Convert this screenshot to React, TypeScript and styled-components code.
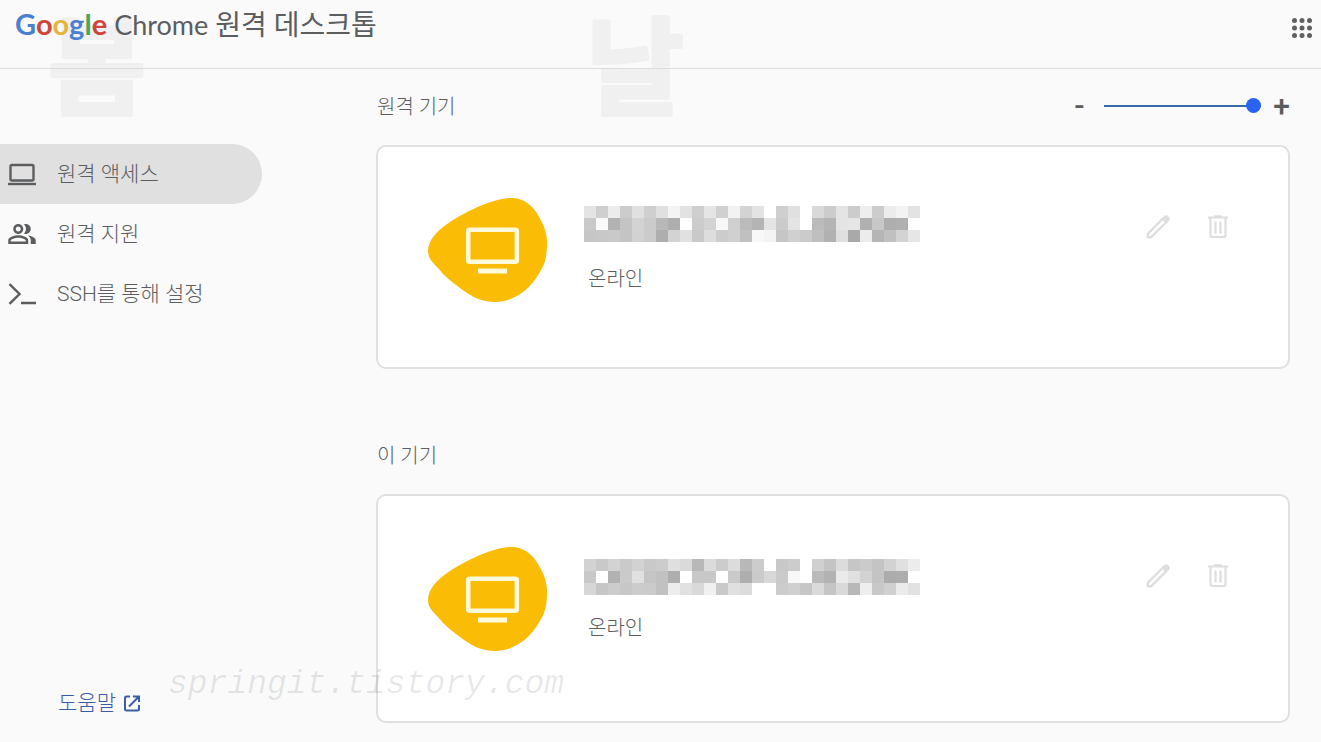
import React from "react";
import styled, { createGlobalStyle } from "styled-components";
import { MdOutlinePeopleAlt } from "react-icons/md";

const GlobalStyle = createGlobalStyle`
  * { box-sizing: border-box; }
  body {
    margin: 0;
    background: #fafafa;
    color: #5b5d5f;
    font-family: Roboto, "Noto Sans CJK KR", sans-serif;
    font-weight: 300;
  }
  button { border: 0; padding: 0; background: none; color: inherit; font-family: inherit; cursor: pointer; }
  a { color: inherit; text-decoration: none; }
  svg { display: block; flex: none; }
`;

const Page = styled.div`
  position: relative;
  min-height: 100vh;
  display: flex;
  flex-direction: column;
  isolation: isolate;
  overflow: hidden;
`;

const Header = styled.header`
  height: 69px;
  display: flex;
  align-items: flex-start;
  justify-content: space-between;
  padding: 4px 7px 0 15px;
  border-bottom: 1px solid #dcdcdc;
`;

const Brand = styled.a`
  display: flex;
  align-items: baseline;
  gap: 7px;
  line-height: 40px;
  white-space: nowrap;
`;

const Google = styled.span`
  font-family: Lato, sans-serif;
  font-weight: 700;
  font-size: 29px;
`;

const Letter = styled.span<{ $color: string }>`
  color: ${(p) => p.$color};
`;

const Chrome = styled.span`
  font-family: Lato, sans-serif;
  font-weight: 400;
  font-size: 27px;
`;

const Product = styled.span`
  font-family: Roboto, "Noto Sans CJK KR", sans-serif;
  font-size: 28px;
  font-weight: 400;
`;

const AppsButton = styled.button`
  margin-top: 12px;
`;

const Body = styled.div`
  flex: 1;
  display: flex;
`;

const Sidebar = styled.aside`
  flex: none;
  width: 376px;
  display: flex;
  flex-direction: column;
  justify-content: space-between;
  padding: 75px 0 24px;
`;

const Nav = styled.nav`
  width: 262px;
  display: flex;
  flex-direction: column;
`;

const NavItem = styled.a<{ $active?: boolean }>`
  height: 60px;
  display: flex;
  align-items: center;
  gap: 20px;
  padding-left: 7px;
  border-radius: 0 30px 30px 0;
  background: ${(p) => (p.$active ? "#e0e0e0" : "transparent")};
  font-size: 21px;
  line-height: 30px;
`;

const HelpLink = styled.a`
  display: flex;
  align-items: center;
  gap: 7px;
  padding-left: 58px;
  color: #3c5ca8;
  font-size: 21px;
  line-height: 30px;
`;

const Main = styled.main`
  flex: 1;
  min-width: 0;
  display: flex;
  flex-direction: column;
  gap: 49px;
  padding: 0 31px 19px 0;
`;

const Section = styled.section<{ $grow?: boolean }>`
  display: flex;
  flex-direction: column;
  flex-grow: ${(p) => (p.$grow ? 1 : 0)};
`;

const SectionHead = styled.div`
  height: 76px;
  display: flex;
  align-items: center;
  justify-content: space-between;
  padding-left: 1px;
`;

const Title = styled.h2`
  margin: 0;
  font-size: 20px;
  font-weight: 300;
  line-height: 30px;
`;

const Zoom = styled.div`
  display: flex;
  align-items: center;
  gap: 12px;
  padding-bottom: 3px;
`;

const ZoomButton = styled.button`
  font-size: 30px;
  line-height: 30px;
  font-weight: 500;
`;

const Slider = styled.input`
  appearance: none;
  width: 157px;
  height: 15px;
  margin: 0 0 0 8px;
  background: linear-gradient(#366aa6, #366aa6) center / 100% 2px no-repeat;
  &::-webkit-slider-thumb {
    appearance: none;
    width: 15px;
    height: 15px;
    border-radius: 50%;
    background: #2a62f4;
  }
`;

const Card = styled.article`
  flex: 1;
  min-height: 224px;
  display: flex;
  align-items: flex-start;
  padding: 50px 55px 0 50px;
  background: #fff;
  border: 2px solid #e0e0e0;
  border-radius: 10px;
`;

const Info = styled.div`
  flex: 1;
  display: flex;
  flex-direction: column;
  gap: 18px;
  padding: 9px 0 0 37px;
`;

const NameBox = styled.div<{ $low?: boolean }>`
  height: 40px;
  display: flex;
  align-items: ${(p) => (p.$low ? "flex-end" : "flex-start")};
`;

const Status = styled.p`
  margin: 0;
  padding-left: 4px;
  font-size: 20px;
  line-height: 30px;
`;

const Actions = styled.div`
  display: flex;
  gap: 30px;
  padding-top: 15px;
  color: #dedede;
`;

const WatermarkSyllable = styled.svg<{ $left: number }>`
  position: absolute;
  z-index: -1;
  top: 7px;
  left: ${(p) => p.$left}px;
  fill: #f0f0f0;
  stroke: #f0f0f0;
  stroke-width: 4px;
  stroke-linejoin: round;
  font-family: "Noto Sans CJK KR", sans-serif;
  font-size: 106px;
  font-weight: 700;
  pointer-events: none;
`;

const WatermarkSite = styled.span`
  position: absolute;
  top: 665px;
  left: 168px;
  color: rgba(0, 0, 0, 0.09);
  font-family: "Liberation Mono", monospace;
  font-style: italic;
  font-size: 33px;
  line-height: 40px;
  pointer-events: none;
`;

const AppsIcon = () => (
  <svg width="24" height="24" viewBox="0 0 24 24" fill="#5f6163">
    {[4.5, 12, 19.5].map((y) =>
      [4.5, 12, 19.5].map((x) => <circle key={`${x}-${y}`} cx={x} cy={y} r="2.5" />)
    )}
  </svg>
);

const LaptopIcon = () => (
  <svg width="30" height="30" viewBox="0 0 30 30" fill="none" stroke="currentColor">
    <rect x="3.5" y="6" width="23" height="15.5" rx="1.5" strokeWidth="2.4" />
    <path d="M1 25h28" strokeWidth="2.4" />
  </svg>
);

const PromptIcon = () => (
  <svg width="30" height="30" viewBox="0 0 30 30" fill="none" stroke="currentColor" strokeWidth="2.4">
    <path d="M2.5 5.2 12.5 15 2.5 24.8M14 24h15" />
  </svg>
);

const OpenIcon = () => (
  <svg width="18" height="18" viewBox="0 0 18 18" fill="none" stroke="currentColor" strokeWidth="2">
    <path d="M7 2.5H3.5A1.5 1.5 0 0 0 2 4v11a1.5 1.5 0 0 0 1.5 1.5h11A1.5 1.5 0 0 0 16 15v-4M10 2.5h6V8M16 2.5l-10 10" />
  </svg>
);

const PencilIcon = () => (
  <svg width="30" height="30" viewBox="0 0 30 30" fill="none" stroke="currentColor">
    <path d="M4.8 25.2v-3.4L20.5 6 24 9.5 8.2 25.2z" strokeWidth="2.4" strokeLinejoin="round" />
    <path
      d="m19.5 7 2.3-2.3q1.5-1.2 3.2.3t.3 3.3L23 10.5z"
      fill="currentColor"
      strokeWidth="1.6"
      strokeLinejoin="round"
    />
  </svg>
);

const TrashIcon = () => (
  <svg width="30" height="30" viewBox="0 0 30 30" fill="none" stroke="currentColor" strokeWidth="2.2">
    <path d="M5 5.5h20M11 4.3h8M7.5 6v17.5A1.5 1.5 0 0 0 9 25h12a1.5 1.5 0 0 0 1.5-1.5V6M12.500 9.5v12M17.5 9.5v12" />
  </svg>
);

const DeviceIcon = () => (
  <svg width="119" height="106" viewBox="0 0 119 106">
    <path
      fill="#fabc05"
      d="M0 54C0 44 8 34 22 25C36 16 64 1 84 1C96 1 105 9 110 18C116 28 119 36 119 46C119 60 117 68 110 78C102 92 86 105 67 105C54 105 44 100 32 91C24 85 16 79 10 71C3 64 0 60 0 54Z"
    />
    <rect x="40.2" y="32.7" width="48.6" height="32" rx="1.5" fill="none" stroke="#fffadc" strokeWidth="4.5" />
    <path d="M50 74h29" stroke="#fffadc" strokeWidth="5" />
  </svg>
);

const CELL = 12;

const MaskedName = ({ rows }: { rows: string[] }) => (
  <svg width="336" height="36" viewBox="0 0 336 36" shapeRendering="crispEdges" aria-hidden="true">
    {rows.map((row, y) =>
      row.split(" ").map((tone, x) => (
        <rect key={`${x}-${y}`} x={x * CELL} y={y * CELL} width={CELL} height={CELL} fill={`#${tone}${tone}${tone}`} />
      ))
    )}
  </svg>
);

const remoteName = [
  "e4 cf ec cc e0 cf e0 f4 e2 cf e5 d0 f2 d3 e3 ff cf e0 ff d9 cc e4 cc ee cc ec f3 e3",
  "c9 fa b2 c4 d3 cb b8 ae ff cc d3 f8 cf bb b4 e4 cb e4 ff bb b4 e4 e6 b0 c8 ae b0 ff",
  "c6 c8 c9 c4 d2 cb ae d3 e1 c9 dd cc d0 c0 f8 f4 c6 d0 cb bf b1 df a9 ec b5 c0 d3 e6",
];

const localName = [
  "d2 c9 d3 ca d2 c9 cc df da b8 db cc dc b8 cc ff c8 cc ff d0 c4 dc c6 cb c4 d2 e0 ec",
  "c8 ff b2 ca e0 c5 c1 ae ff c8 c8 ff ca ae cb d8 ca f8 ff ba b2 ea e0 d2 c4 ac ad ff",
  "d6 c6 cc c7 cc cb c1 ed e1 d9 f0 c9 e0 dc ff ff cc d0 c6 da c5 d9 b8 ee c8 d0 eb e2",
];

const googleLetters: [string, string][] = [
  ["G", "#4a80d0"],
  ["o", "#cf4539"],
  ["o", "#e3b53c"],
  ["g", "#4a80d0"],
  ["l", "#48a55c"],
  ["e", "#cf4539"],
];

const DeviceCard = ({ name, low }: { name: string[]; low?: boolean }) => (
  <Card>
    <DeviceIcon />
    <Info>
      <NameBox $low={low}>
        <MaskedName rows={name} />
      </NameBox>
      <Status>온라인</Status>
    </Info>
    <Actions>
      <button type="button" aria-label="수정">
        <PencilIcon />
      </button>
      <button type="button" aria-label="삭제">
        <TrashIcon />
      </button>
    </Actions>
  </Card>
);

const Syllable = ({ left, children }: { left: number; children: string }) => (
  <WatermarkSyllable $left={left} width="120" height="120" viewBox="0 0 120 120">
    <text x="60" y="99" textAnchor="middle">
      {children}
    </text>
  </WatermarkSyllable>
);

export default function App() {
  return (
    <Page>
      <GlobalStyle />
      <Header>
        <Brand href="#">
          <Google>
            {googleLetters.map(([letter, color], i) => (
              <Letter key={i} $color={color}>
                {letter}
              </Letter>
            ))}
          </Google>
          <Chrome>Chrome</Chrome>
          <Product>원격 데스크톱</Product>
        </Brand>
        <AppsButton type="button" aria-label="앱">
          <AppsIcon />
        </AppsButton>
      </Header>
      <Body>
        <Sidebar>
          <Nav>
            <NavItem href="#access" $active>
              <LaptopIcon />
              원격 액세스
            </NavItem>
            <NavItem href="#support">
              <MdOutlinePeopleAlt size={30} />
              원격 지원
            </NavItem>
            <NavItem href="#ssh">
              <PromptIcon />
              SSH를 통해 설정
            </NavItem>
          </Nav>
          <HelpLink href="#help">
            도움말
            <OpenIcon />
          </HelpLink>
        </Sidebar>
        <Main>
          <Section>
            <SectionHead>
              <Title>원격 기기</Title>
              <Zoom>
                <ZoomButton type="button">-</ZoomButton>
                <Slider type="range" min={0} max={100} defaultValue={100} aria-label="크기" />
                <ZoomButton type="button">+</ZoomButton>
              </Zoom>
            </SectionHead>
            <DeviceCard name={remoteName} />
          </Section>
          <Section $grow>
            <SectionHead>
              <Title>이 기기</Title>
            </SectionHead>
            <DeviceCard name={localName} low />
          </Section>
        </Main>
      </Body>
      <Syllable left={37}>봄</Syllable>
      <Syllable left={575}>날</Syllable>
      <WatermarkSite>springit.tistory.com</WatermarkSite>
    </Page>
  );
}
